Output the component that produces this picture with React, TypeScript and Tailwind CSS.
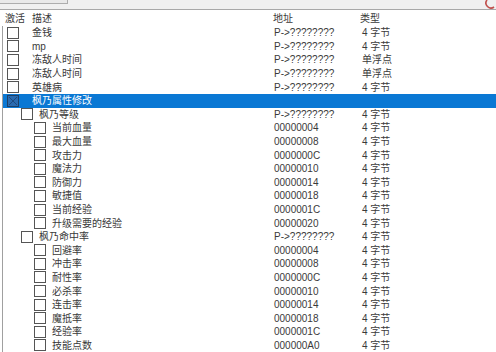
const rows: { level: number; name: string; addr: string; type: string; selected?: boolean }[] = [
  { level: 0, name: '金钱', addr: 'P->????????', type: '4 字节' },
  { level: 0, name: 'mp', addr: 'P->????????', type: '4 字节' },
  { level: 0, name: '冻敌人时间', addr: 'P->????????', type: '单浮点' },
  { level: 0, name: '冻敌人时间', addr: 'P->????????', type: '单浮点' },
  { level: 0, name: '英雄病', addr: 'P->????????', type: '4 字节' },
  { level: 0, name: '枫乃属性修改', addr: '', type: '', selected: true },
  { level: 1, name: '枫乃等级', addr: 'P->????????', type: '4 字节' },
  { level: 2, name: '当前血量', addr: '00000004', type: '4 字节' },
  { level: 2, name: '最大血量', addr: '00000008', type: '4 字节' },
  { level: 2, name: '攻击力', addr: '0000000C', type: '4 字节' },
  { level: 2, name: '魔法力', addr: '00000010', type: '4 字节' },
  { level: 2, name: '防御力', addr: '00000014', type: '4 字节' },
  { level: 2, name: '敏捷值', addr: '00000018', type: '4 字节' },
  { level: 2, name: '当前经验', addr: '0000001C', type: '4 字节' },
  { level: 2, name: '升级需要的经验', addr: '00000020', type: '4 字节' },
  { level: 1, name: '枫乃命中率', addr: 'P->????????', type: '4 字节' },
  { level: 2, name: '回避率', addr: '00000004', type: '4 字节' },
  { level: 2, name: '冲击率', addr: '00000008', type: '4 字节' },
  { level: 2, name: '耐性率', addr: '0000000C', type: '4 字节' },
  { level: 2, name: '必杀率', addr: '00000010', type: '4 字节' },
  { level: 2, name: '连击率', addr: '00000014', type: '4 字节' },
  { level: 2, name: '魔抵率', addr: '00000018', type: '4 字节' },
  { level: 2, name: '经验率', addr: '0000001C', type: '4 字节' },
  { level: 2, name: '技能点数', addr: '000000A0', type: '4 字节' },
];

const boxPad = ['pl-[4px]', 'pl-[18px]', 'pl-[31px]'];
const nameGap = ['w-[13px]', 'w-[6px]', 'w-[6px]'];

export default function App() {
  return (
    <div
      className="relative w-[496px] h-[352px] overflow-hidden bg-white text-[10px] text-[#3a3a3a]"
      style={{ fontFamily: '"Liberation Sans", "Noto Sans CJK SC", sans-serif' }}
    >
      {/* top strip */}
      <div className="h-[10px] bg-[#f0f0f0] border-b border-[#a8a8a8] flex">
        <div className="w-[68px] h-[4px] border-r border-b border-[#adadad] bg-[#e9e9e9]" />
        <div className="flex-1" />
        <svg width="10" height="9" viewBox="0 0 10 9" className="mr-[1px]">
          <path d="M2 0 A5 5 0 0 0 9 7" fill="none" stroke="#c0504d" strokeWidth="1.6" />
        </svg>
      </div>

      {/* header */}
      <div className="h-[16px] flex items-center">
        <span className="w-[32px] pl-[5px]">激活</span>
        <span className="w-[241px]">描述</span>
        <span className="w-[87px]">地址</span>
        <span>类型</span>
      </div>

      {/* body */}
      <div className="ml-[2px] border-l border-[#a0a0a0]">
        {rows.map((r, i) => (
          <div
            key={i}
            className={
              'h-[13.6px] flex items-center ' + (r.selected ? 'bg-[#0a78d4] text-white' : '')
            }
          >
            <div className={'flex items-center shrink-0 ' + boxPad[r.level]}>
              <div
                className={
                  'w-[12px] h-[12px] border relative ' +
                  (r.selected ? 'border-[#1d3f66] bg-[#2a6bb0]' : 'border-[#555] bg-white')
                }
              >
                {r.selected && (
                  <svg width="10" height="10" viewBox="0 0 10 10" className="absolute inset-0">
                    <path d="M1 1 L9 9 M9 1 L1 9" stroke="#1d4a7f" strokeWidth="1" />
                  </svg>
                )}
              </div>
            </div>
            <div className={'shrink-0 ' + nameGap[r.level]} />
            <span className="flex-1 whitespace-nowrap">{r.name}</span>
            <span className="w-[88px] shrink-0 whitespace-nowrap">{r.addr}</span>
            <span className="w-[134px] shrink-0 whitespace-nowrap">{r.type}</span>
          </div>
        ))}
      </div>
    </div>
  );
}
